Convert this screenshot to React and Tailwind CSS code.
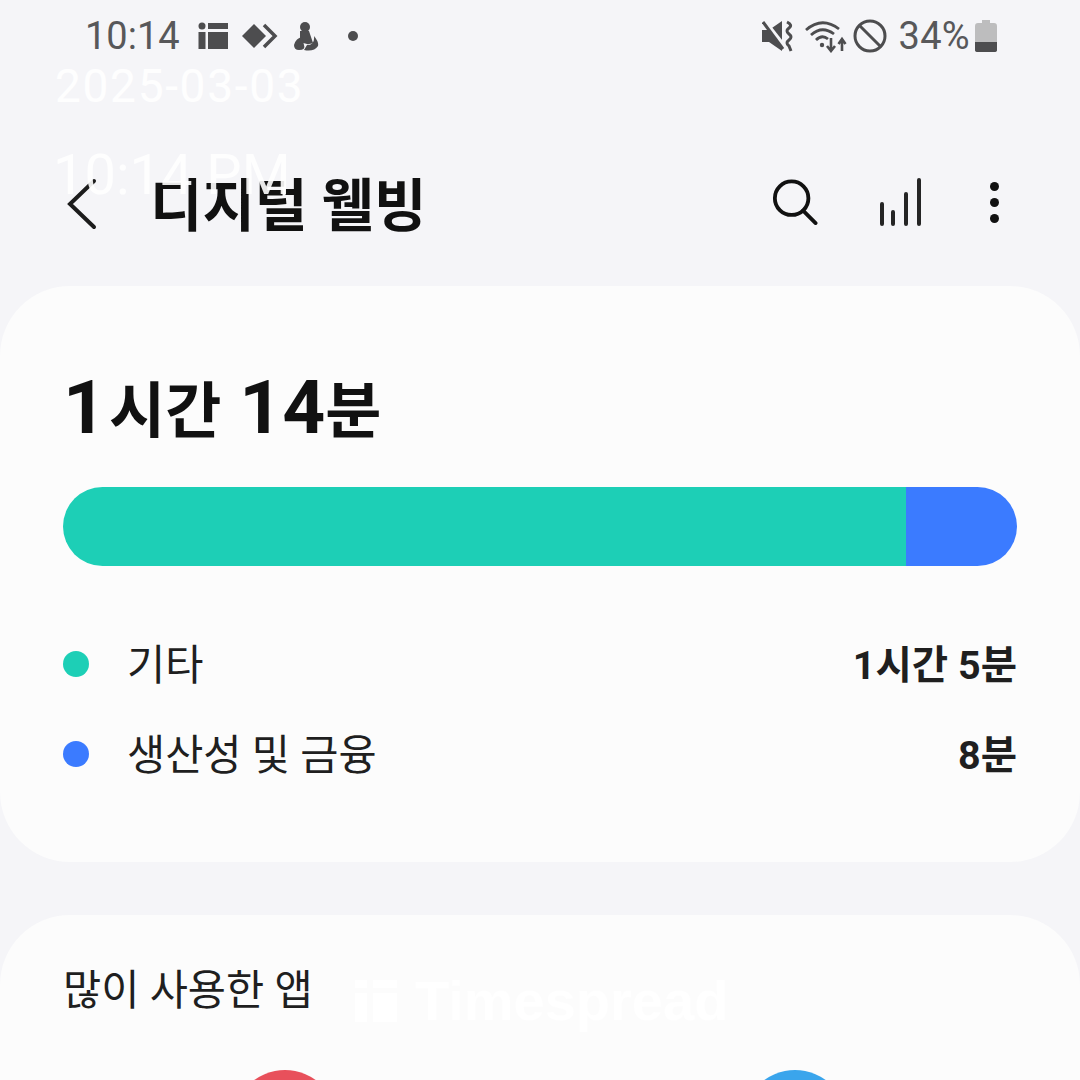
import React from 'react';

const sans = "font-['Roboto','Noto_Sans_CJK_KR',sans-serif]";

const NoticeIcons = () => (
  <div className="flex items-center ml-[18px]">
    {/* calendar-ish grid */}
    <svg width="30" height="28" viewBox="0 0 30 28" fill="#4d4d4f">
      <circle cx="4" cy="4" r="3.5" />
      <rect x="0.5" y="10" width="7" height="17" />
      <rect x="10" y="1" width="20" height="6" />
      <rect x="10" y="10" width="20" height="17" />
    </svg>
    <svg width="38" height="28" viewBox="0 0 38 28" className="ml-[13px]">
      <path d="M13 2 L25 14 L13 26 L1 14 Z" fill="#4d4d4f" />
      <path d="M23 3 L34 14 L23 25" fill="none" stroke="#4d4d4f" strokeWidth="3.5" />
    </svg>
    <svg width="26" height="30" viewBox="0 0 26 30" fill="#4d4d4f" className="ml-[14px]">
      <circle cx="12" cy="6" r="5" />
      <path d="M7 10 L16 10 L20 22 Q13 25 7 20 Z" />
      <path d="M1 24 Q3 17 9 16 L11 24 Q13 29 6 29 Q1 29 1 24 Z" />
      <path d="M14 24 Q22 24 21 15 Q26 21 25 25 Q21 31 11 29 Z" />
    </svg>
    <span className="ml-[29px] w-[10px] h-[10px] rounded-full bg-[#4d4d4f]" />
  </div>
);

const StatusIcons = () => (
  <div className="flex items-center">
    {/* muted speaker with vibrate waves */}
    <svg width="32" height="32" viewBox="0 0 32 32" fill="none">
      <path d="M0 10 H7 L20 1 V31 L7 22 H0 Z" fill="#4d4d4f" />
      <path d="M2 1 L24 29" stroke="#f5f5f8" strokeWidth="5" />
      <path d="M1 2 L21 29" stroke="#4d4d4f" strokeWidth="3" />
      <path d="M25 2 Q31 5 27 8 Q23 11 27 14 Q31 17 27 20 Q23 23 27 26 L29 31" stroke="#4d4d4f" strokeWidth="3" />
    </svg>
    {/* wifi with data arrows */}
    <svg width="42" height="34" viewBox="0 0 42 34" fill="none" className="ml-[11px]">
      <path d="M1 11 Q17 -3 34 10" stroke="#4d4d4f" strokeWidth="2.8" />
      <path d="M6 16 Q17 6 29 15" stroke="#4d4d4f" strokeWidth="2.8" />
      <path d="M11 21 Q17 15 23 20" stroke="#4d4d4f" strokeWidth="2.8" />
      <circle cx="17" cy="26" r="2.2" fill="#4d4d4f" />
      <path d="M26 19 V30 M22 27 L26 32 L30 27" stroke="#4d4d4f" strokeWidth="2.6" />
      <path d="M37 32 V21 M33.5 25 L37 20 L40.5 25" stroke="#4d4d4f" strokeWidth="2.6" />
    </svg>
    <svg width="34" height="34" viewBox="0 0 34 34" fill="none" className="ml-[6px]">
      <circle cx="17" cy="17" r="15" stroke="#4d4d4f" strokeWidth="3" />
      <path d="M6.5 6.5 L27.5 27.5" stroke="#4d4d4f" strokeWidth="3" />
    </svg>
    <span className={`${sans} ml-[12px] text-[38px] leading-none tracking-[0.3px] text-[#58585a]`}>34%</span>
    <svg width="22" height="34" viewBox="0 0 22 34" className="ml-[5px]">
      <path d="M7 1 H15 V4 H19 Q22 4 22 7 V31 Q22 33 19 33 H3 Q0 33 0 31 V7 Q0 4 3 4 H7 Z" fill="#bdbdbe" />
      <path d="M0 23 H22 V31 Q22 33 19 33 H3 Q0 33 0 31 Z" fill="#4d4d4f" />
    </svg>
  </div>
);

const LegendRow = ({ color, label, value }) => (
  <div className="flex items-center h-[46px]">
    <span className={`w-[26px] h-[26px] rounded-full ${color}`} />
    <span className="ml-[38px] mt-[3px] text-[41.5px] leading-none text-[#1f1f1f]">{label}</span>
    <span className="ml-auto mt-[3px] text-[39.5px] leading-none font-bold text-[#1f1f1f]">{value}</span>
  </div>
);

export default function App() {
  return (
    <div className={`${sans} relative w-[1080px] h-[1080px] overflow-hidden bg-[#f5f5f8]`}>
      <div className="flex items-center justify-between h-[72px] pl-[85px] pr-[83px]">
        <div className="flex items-center">
          <span className="text-[38px] leading-none text-[#58585a]">10:14</span>
          <NoticeIcons />
        </div>
        <StatusIcons />
      </div>

      <header className="flex items-center h-[130px] mt-[67px] pl-[67px] pr-[81px]">
        <svg width="30" height="52" viewBox="0 0 30 52" fill="none" stroke="#1c1c1c" strokeWidth="4" strokeLinecap="round">
          <path d="M27 3 L3 26 L27 49" />
        </svg>
        <h1 className="ml-[53px] mt-[5px] text-[57px] leading-none font-bold text-[#111111]">디지털 웰빙</h1>
        <div className="ml-auto flex items-center mb-[4px]">
          <svg width="47" height="46" viewBox="0 0 48 48" fill="none" stroke="#111111" strokeWidth="4">
            <circle cx="21" cy="20" r="17.5" />
            <path d="M33 33 L46 46" strokeLinecap="round" />
          </svg>
          <svg width="44" height="48" viewBox="0 0 44 48" fill="none" stroke="#252525" strokeWidth="4" strokeLinecap="round" className="ml-[61px]">
            <path d="M3 26 V46 M14 34 V46 M27 16 V46 M40 2 V46" />
          </svg>
          <div className="flex flex-col gap-[7px] ml-[67px]">
            <span className="w-[9px] h-[9px] rounded-full bg-[#111111]" />
            <span className="w-[9px] h-[9px] rounded-full bg-[#111111]" />
            <span className="w-[9px] h-[9px] rounded-full bg-[#111111]" />
          </div>
        </div>
      </header>

      <main className="flex flex-col gap-[53px] mt-[17px]">
        <section className="h-[576px] rounded-[70px] bg-[#fcfcfc] px-[63px] pt-[84px]">
          <div className="flex items-baseline h-[72px] font-bold text-[#111111]">
            <span className="text-[75px] leading-none">1</span>
            <span className="ml-[3px] text-[61px] leading-none">시간</span>
            <span className="ml-[18px] text-[75px] leading-none">14</span>
            <span className="text-[61px] leading-none">분</span>
          </div>
          <div className="flex h-[79px] mt-[45px] rounded-full overflow-hidden">
            <div className="w-[843px] bg-[#1dcfb6]" />
            <div className="flex-1 bg-[#3b7bff]" />
          </div>
          <div className="flex flex-col gap-[44px] mt-[75px]">
            <LegendRow color="bg-[#1dcfb6]" label="기타" value="1시간 5분" />
            <LegendRow color="bg-[#3b7bff]" label="생산성 및 금융" value="8분" />
          </div>
        </section>

        <section className="rounded-t-[70px] bg-[#fcfcfc] h-[300px] px-[63px] pt-[52px]">
          <h2 className="text-[41.5px] leading-[48px] text-[#1f1f1f]">많이 사용한 앱</h2>
          <div className="flex mt-[55px] pl-[170px] gap-[406px]">
            <span className="w-[104px] h-[104px] rounded-full bg-[#e8505b]" />
            <span className="w-[104px] h-[104px] rounded-full bg-[#3aa5ec]" />
          </div>
        </section>
      </main>

      {/* date stamp and brand mark laid over the screen */}
      <div className="absolute left-[55px] top-[60px] text-[46px] leading-[52px] tracking-[1.7px] text-white/90">2025-03-03</div>
      <div className="absolute left-[53px] top-[145px] text-[56px] leading-[60px] text-white/90">10:14 PM</div>
      <div className="absolute left-[355px] top-[972px] flex items-center gap-[16px] text-white/90 font-bold text-[56px] leading-[58px] font-['Liberation_Sans',sans-serif]">
        <svg width="44" height="42" viewBox="0 0 44 42" fill="#fff">
          <rect x="0" y="0" width="12" height="8" />
          <rect x="0" y="13" width="12" height="29" />
          <rect x="18" y="0" width="24" height="8" />
          <rect x="18" y="13" width="24" height="29" />
        </svg>
        Timespread
      </div>
    </div>
  );
}
